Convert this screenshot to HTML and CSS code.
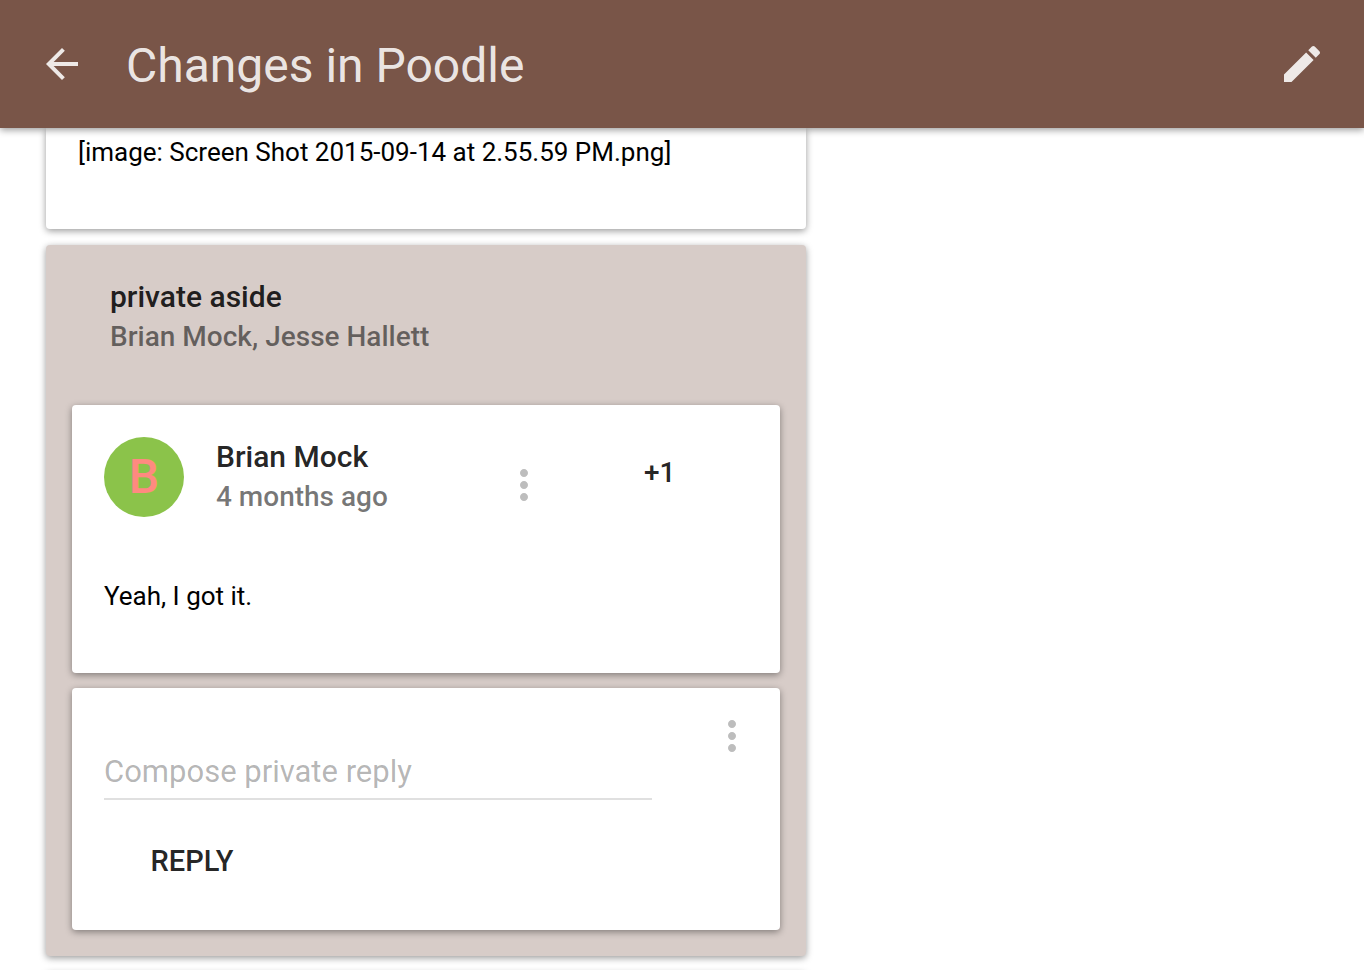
FILE: index.html
```html
<!DOCTYPE html>
<html lang="en">
<head>
<meta charset="utf-8">
<meta name="viewport" content="width=device-width, initial-scale=1">
<title>Changes in Poodle</title>
<link rel="stylesheet" href="styles.css">
</head>
<body>
<header class="app-bar">
  <button class="icon-button" type="button" aria-label="Back">
    <svg class="icon" viewBox="0 0 24 24" aria-hidden="true"><path d="M20 11H7.83l5.59-5.59L12 4l-8 8 8 8 1.41-1.41L7.83 13H20v-2z"/></svg>
  </button>
  <h1 class="app-title">Changes in Poodle</h1>
  <button class="icon-button" type="button" aria-label="Edit">
    <svg class="icon" viewBox="0 0 24 24" aria-hidden="true"><path d="M3 17.25V21h3.75L17.81 9.94l-3.75-3.75L3 17.25zM20.71 7.04c.39-.39.39-1.02 0-1.41l-2.34-2.34c-.39-.39-1.02-.39-1.41 0l-1.83 1.83 3.75 3.75 1.83-1.83z"/></svg>
  </button>
</header>
<main class="thread">
  <article class="card message">
    <p class="body-text">[image: Screen Shot 2015-09-14 at 2.55.59 PM.png]</p>
  </article>
  <section class="card aside">
    <header class="aside-header">
      <h2 class="name">private aside</h2>
      <p class="meta">Brian Mock, Jesse Hallett</p>
    </header>
    <article class="card inner">
      <header class="post-header">
        <span class="avatar" aria-hidden="true">B</span>
        <div class="author">
          <h3 class="name">Brian Mock</h3>
          <p class="meta">4 months ago</p>
        </div>
        <button class="more-button" type="button" aria-label="Message actions">
          <svg class="icon" viewBox="0 0 24 24" aria-hidden="true"><path d="M12 8c1.1 0 2-.9 2-2s-.9-2-2-2-2 .9-2 2 .9 2 2 2zm0 2c-1.1 0-2 .9-2 2s.9 2 2 2 2-.9 2-2-.9-2-2-2zm0 6c-1.1 0-2 .9-2 2s.9 2 2 2 2-.9 2-2-.9-2-2-2z"/></svg>
        </button>
        <button class="plus-one" type="button">+1</button>
      </header>
      <p class="body-text">Yeah, I got it.</p>
    </article>
    <form class="card inner compose">
      <div class="compose-row">
        <input class="reply-input" type="text" aria-label="Compose private reply" placeholder="Compose private reply">
        <button class="more-button" type="button" aria-label="Reply options">
          <svg class="icon" viewBox="0 0 24 24" aria-hidden="true"><path d="M12 8c1.1 0 2-.9 2-2s-.9-2-2-2-2 .9-2 2 .9 2 2 2zm0 2c-1.1 0-2 .9-2 2s.9 2 2 2 2-.9 2-2-.9-2-2-2zm0 6c-1.1 0-2 .9-2 2s.9 2 2 2 2-.9 2-2-.9-2-2-2z"/></svg>
        </button>
      </div>
      <button class="reply-button" type="button">REPLY</button>
    </form>
  </section>
  <article class="card next"></article>
</main>
</body>
</html>
```
FILE: styles.css
```css
* {
  box-sizing: border-box;
}

body {
  display: flex;
  flex-direction: column;
  height: 100vh;
  margin: 0;
  overflow: hidden;
  background: #fff;
  color: #000;
  font-family: Roboto, "Liberation Sans", sans-serif;
}

h1, h2, h3, p {
  margin: 0;
}

button {
  padding: 0;
  border: 0;
  background: none;
  color: inherit;
  font: inherit;
  cursor: pointer;
}

.icon {
  display: block;
  width: 48px;
  height: 48px;
  fill: currentColor;
}

.app-bar {
  position: relative;
  z-index: 1;
  display: flex;
  flex-shrink: 0;
  align-items: center;
  height: 128px;
  padding: 0 38px;
  background: #795548;
  color: rgba(255, 255, 255, 0.87);
  box-shadow: 0 2px 7px rgba(0, 0, 0, 0.4);
}

.app-title {
  flex: 1;
  padding: 4px 0 0 40px;
  font-size: 48px;
  font-weight: 400;
  line-height: 64px;
}

.thread {
  display: flex;
  flex: 1;
  flex-direction: column;
  gap: 16px;
  min-height: 0;
  padding: 0 46px;
  overflow: hidden;
}

.card {
  border-radius: 4px;
  background: #fff;
  box-shadow: 0 2px 7px rgba(0, 0, 0, 0.4);
}

.thread > .card {
  flex-shrink: 0;
  width: 100%;
  max-width: 760px;
}

.message {
  padding: 6px 32px 59px;
  border-radius: 0 0 4px 4px;
}

.body-text {
  font-size: 26px;
  font-weight: 400;
  line-height: 36px;
}

.aside {
  display: flex;
  flex-direction: column;
  gap: 15px;
  padding: 32px 26px 26px;
  background: #d7ccc8;
}

.aside-header {
  padding: 0 38px 33px;
}

.name {
  color: rgba(0, 0, 0, 0.87);
  font-size: 30px;
  font-weight: 500;
  line-height: 40px;
}

.meta {
  color: rgba(0, 0, 0, 0.54);
  font-size: 28px;
  font-weight: 500;
  line-height: 40px;
}

.inner {
  padding: 32px;
  box-shadow: 0 2px 7px rgba(0, 0, 0, 0.4);
}

.post-header {
  display: flex;
  align-items: flex-start;
  margin-bottom: 61px;
}

.avatar {
  width: 80px;
  height: 80px;
  margin-right: 32px;
  border-radius: 50%;
  background: #8bc34a;
  color: #ff8a80;
  font-size: 48px;
  font-weight: 500;
  line-height: 80px;
  text-align: center;
}

.author {
  width: 284px;
}

.more-button {
  margin-top: 24px;
  color: #bdbdbd;
}

.plus-one {
  margin: 16px 0 0 96px;
  color: rgba(0, 0, 0, 0.87);
  font-size: 28px;
  font-weight: 500;
  line-height: 40px;
}

.inner .body-text {
  margin-bottom: 27px;
}

.compose-row {
  display: flex;
  align-items: flex-start;
  justify-content: space-between;
}

.reply-input {
  flex: 1;
  height: 56px;
  margin-right: 56px;
  padding: 0;
  border: 0;
  border-bottom: 2px solid #e0e0e0;
  background: none;
  font: 31px Roboto, "Liberation Sans", sans-serif;
}

.reply-input::placeholder {
  color: rgba(0, 0, 0, 0.3);
}

.compose {
  padding: 24px 24px 33px 32px;
}

.compose .reply-input {
  margin-top: 32px;
}

.compose .more-button {
  margin-top: 0;
}

.reply-button {
  width: 176px;
  height: 72px;
  margin-top: 25px;
  color: rgba(0, 0, 0, 0.87);
  font-size: 29px;
  font-weight: 500;
}

.next {
  height: 160px;
}
```
